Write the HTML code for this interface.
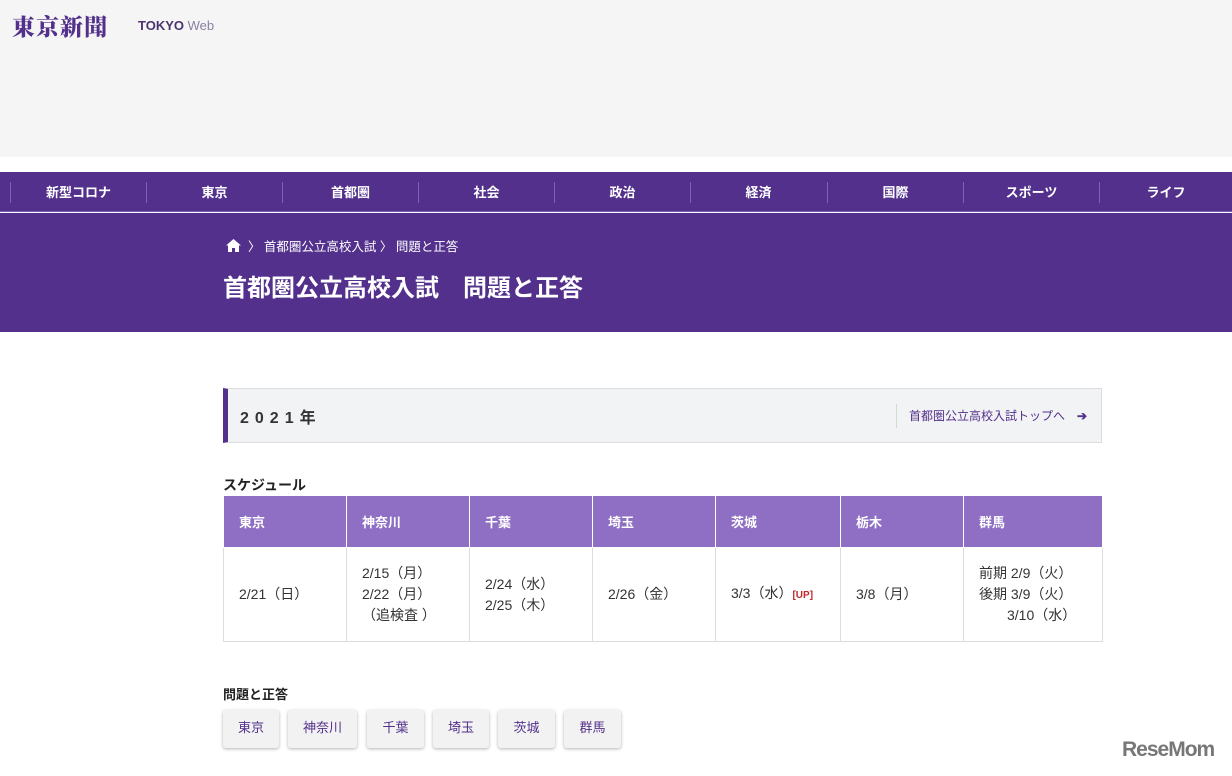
<!DOCTYPE html>
<html><head><meta charset="utf-8"><style>
*{margin:0;padding:0;box-sizing:border-box}
body{width:1232px;height:776px;overflow:hidden;background:#fff;font-family:"Liberation Sans","Noto Sans CJK JP",sans-serif;color:#333;position:relative}
.top{position:absolute;left:0;top:0;width:1232px;height:157px;background:#f5f5f5}
.logo{position:absolute;left:12px;top:9px;font-family:"Noto Serif CJK SC",serif;font-weight:900;font-size:23px;color:#53308b;letter-spacing:1px}
.tw{position:absolute;left:138px;top:18px;font-size:13px;color:#4a3470}
.tw b{font-weight:700}.tw span{color:#8a80a0}
.nav{position:absolute;left:0;top:172px;width:1232px;height:40px;background:#52308c;border-bottom:1px solid #7a5cb5}
.nav div{position:absolute;top:10px;height:21px;width:136px;text-align:center;color:#fff;font-size:13px;font-weight:700;line-height:21px;border-left:1px solid #7d62ad}
.hdr{position:absolute;left:0;top:213px;width:1232px;height:119px;background:#52308c;color:#fff}
.bc{position:absolute;left:226px;top:23px;font-size:12.5px;display:flex;align-items:center}
.h1{position:absolute;left:223px;top:55px;font-size:24px;font-weight:700}
.yr{position:absolute;left:223px;top:388px;width:879px;height:55px;background:#f2f3f5;border:1px solid #dcdde0;border-left:5px solid #53308b}
.yr .t{position:absolute;left:12px;top:15px;font-size:16px;font-weight:700;letter-spacing:6px;color:#333}
.yr .l{position:absolute;left:668px;top:15px;height:24px;border-left:1px solid #d8d8d8;padding-left:12px;font-size:12px;line-height:24px;color:#53308b}
.sec{position:absolute;left:223px;font-size:14px;font-weight:700;color:#222}
table{position:absolute;left:223px;top:495px;border-collapse:collapse;font-size:14px}
th{background:#8e6fc4;color:#fff;text-align:left;height:52px;padding-left:15px;border:1px solid #fff;font-size:13px}
td{height:94px;padding-left:15px;border:1px solid #ddd;line-height:21px;color:#333}
.up{color:#c0282d;font-size:10px;font-weight:700}
.btn{position:absolute;top:710px;height:38px;background:#f2f2f2;box-shadow:0 1px 3px rgba(0,0,0,.3);border-radius:3px;font-size:13px;color:#53308b;text-align:center;line-height:36px}
.rm{position:absolute;left:1122px;top:738px;font-size:21px;font-weight:900;color:#777;letter-spacing:-1px}
</style></head><body>
<div class="top"><div class="logo">東京新聞</div><div class="tw"><b>TOKYO</b> <span>Web</span></div></div>
<div class="nav">
<div style="left:10px">新型コロナ</div><div style="left:146px">東京</div><div style="left:282px">首都圏</div><div style="left:418px">社会</div><div style="left:554px">政治</div><div style="left:690px">経済</div><div style="left:827px">国際</div><div style="left:963px">スポーツ</div><div style="left:1099px;width:133px">ライフ</div>
</div>
<div class="hdr"><div class="bc"><svg width="15" height="13" viewBox="0 0 15 13"><path d="M7.5 0L0 6.5h2V13h4V9h3v4h4V6.5h2z" fill="#fff"/></svg>&nbsp; 〉 首都圏公立高校入試 〉 問題と正答</div><div class="h1">首都圏公立高校入試　問題と正答</div></div>
<div class="yr"><div class="t">2021年</div><div class="l">首都圏公立高校入試トップへ　<b>➔</b></div></div>
<div class="sec" style="top:475px">スケジュール</div>
<table>
<tr><th style="width:123px">東京</th><th style="width:123px">神奈川</th><th style="width:123px">千葉</th><th style="width:123px">埼玉</th><th style="width:125px">茨城</th><th style="width:123px">栃木</th><th style="width:139px">群馬</th></tr>
<tr><td>2/21（日）</td><td>2/15（月）<br>2/22（月）<br>（追検査 ）</td><td>2/24（水）<br>2/25（木）</td><td>2/26（金）</td><td>3/3（水）<span class="up">[UP]</span></td><td>3/8（月）</td><td>前期 2/9（火）<br>後期 3/9（火）<br>&emsp;&emsp;3/10（水）</td></tr>
</table>
<div class="sec" style="top:684px;font-size:13px">問題と正答</div>
<div class="btn" style="left:223px;width:56px">東京</div>
<div class="btn" style="left:288px;width:69px">神奈川</div>
<div class="btn" style="left:367px;width:57px">千葉</div>
<div class="btn" style="left:433px;width:56px">埼玉</div>
<div class="btn" style="left:498px;width:57px">茨城</div>
<div class="btn" style="left:564px;width:57px">群馬</div>
<div class="rm">ReseMom</div>
</body></html>
